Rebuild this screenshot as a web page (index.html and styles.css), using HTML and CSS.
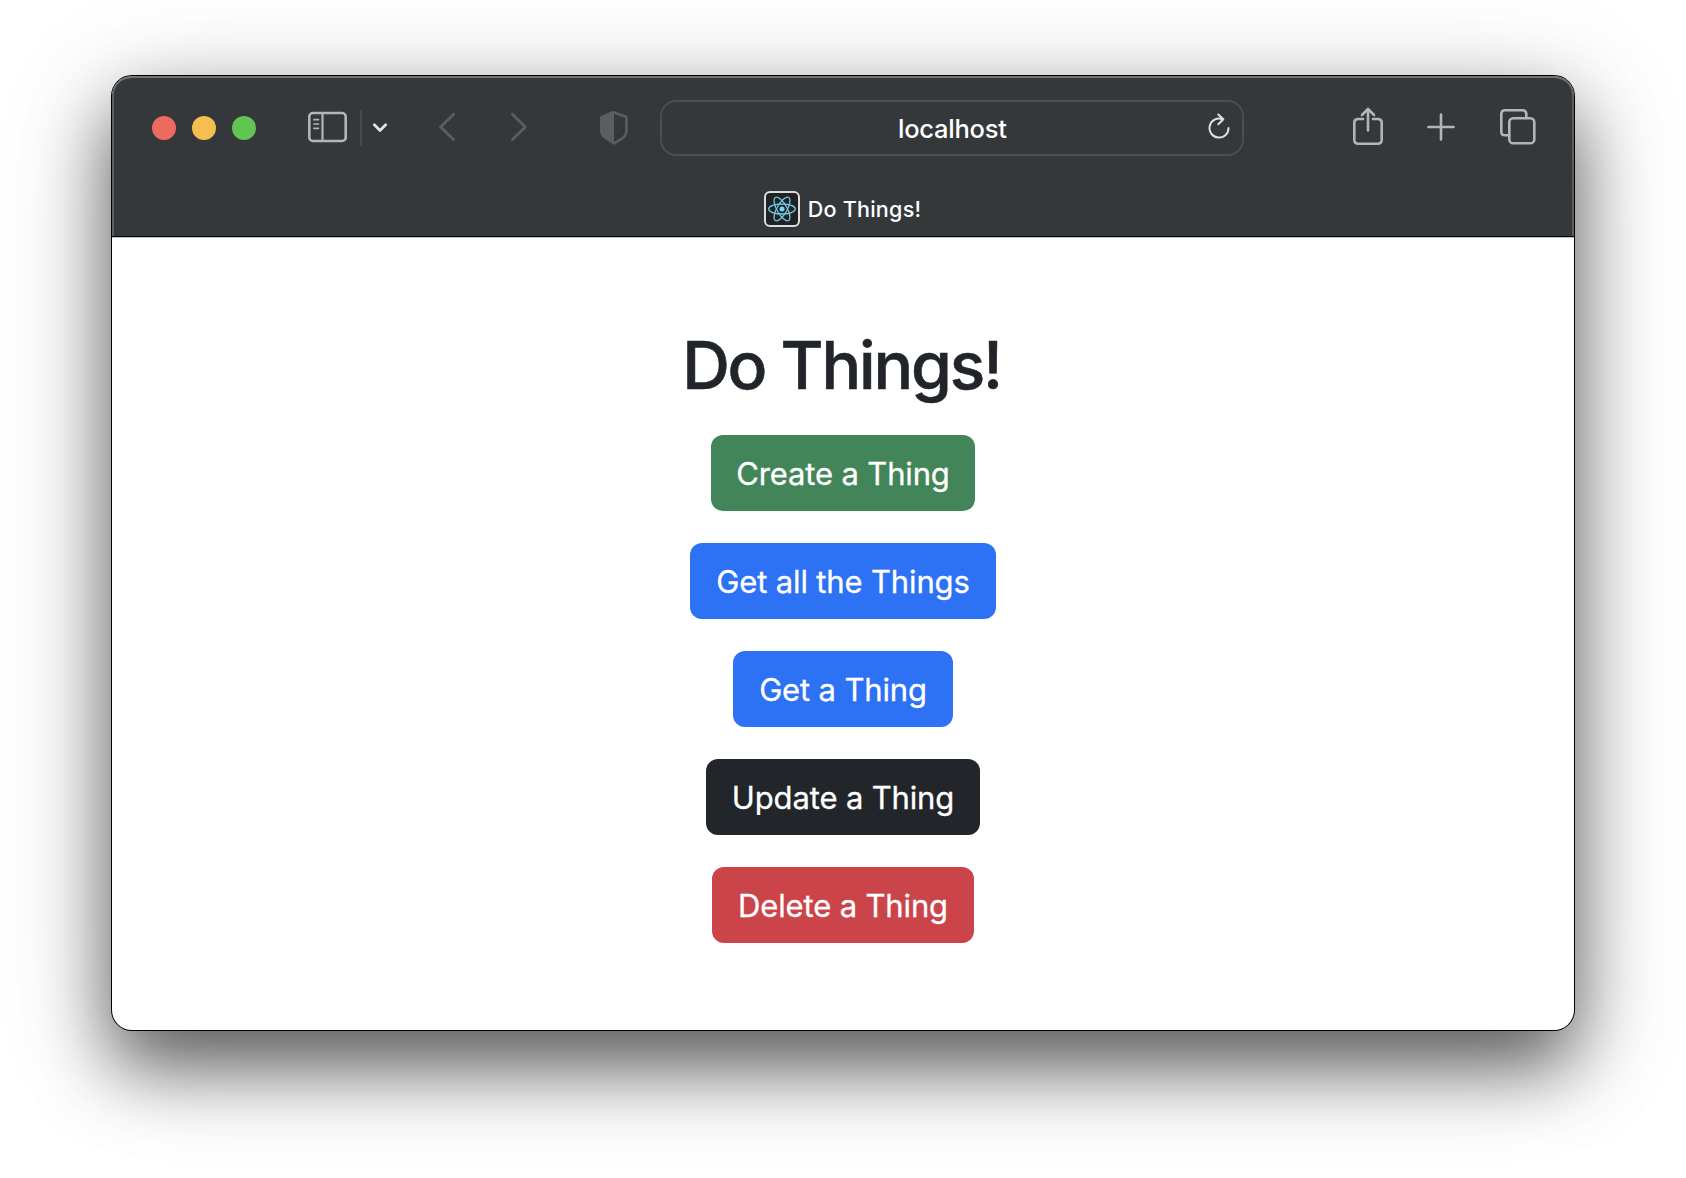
FILE: index.html
```html
<!DOCTYPE html>
<html lang="en">
<head>
<meta charset="utf-8">
<title>Do Things!</title>
<link rel="stylesheet" href="styles.css">
</head>
<body>
<div class="window">
  <header class="chrome">
    <div class="toolbar">
      <div class="lights"><span class="light close"></span><span class="light minimize"></span><span class="light maximize"></span></div>
      <svg class="icon sidebar" width="40" height="32" viewBox="0 0 40 32"><rect x="1.3" y="2" width="36.4" height="28" rx="3.6" stroke-width="2.6"/><path d="M14.5 2v28" stroke-width="2.2"/><path d="M6 8.7h4.5M6 13h4.5M6 17.3h4.5" stroke-width="1.7"/></svg>
      <span class="separator"></span>
      <svg class="icon chevron" width="16" height="12" viewBox="0 0 16 12"><path d="M2.3 2.8 8 8.5l5.7-5.7"/></svg>
      <svg class="icon arrow back" width="18" height="30" viewBox="0 0 18 30"><path d="M15.6 2.2 2.6 15l13 12.6"/></svg>
      <svg class="icon arrow forward" width="18" height="30" viewBox="0 0 18 30"><path d="m2.4 2.2 13 12.8-13 12.6"/></svg>
      <svg class="icon shield" width="28" height="34" viewBox="0 0 28 34"><path class="outline" d="M14 1.5 26.4 6v14c0 3.5-2 6-5.2 8.2L14 32.3"/><path class="half" d="M14 0v33.6L6.2 29C2.2 26.5 0 23.6 0 20V7c0-1.3.6-2 1.9-2.5L11.5.6Z"/></svg>
      <div class="address">
        <span class="host">localhost</span>
        <svg class="icon reload" width="22" height="27" viewBox="0 0 22 27"><path d="M14.3 6.2A9.5 9.5 0 1 0 20.5 15M10.3 1.5l5 4.7-5 5"/></svg>
      </div>
      <svg class="icon share" width="30" height="38" viewBox="0 0 30 38"><path d="M10 12H5.3C2.8 12 1.3 13.3 1.3 15.8v17c0 2.5 1.5 3.9 4 3.9h19.4c2.5 0 4-1.4 4-3.9v-17c0-2.5-1.5-3.8-4-3.8H20M15 23.500V2M9 8l6-6 6 6"/></svg>
      <svg class="icon plus" width="28" height="28" viewBox="0 0 28 28"><path d="M1.500 14h25M14 1.500v25"/></svg>
      <svg class="icon tabs" width="36" height="36" viewBox="0 0 36 36"><path d="M9 26.300H5.200c-2.500 0-3.900-1.400-3.900-3.900V5.200c0-2.500 1.400-3.900 3.900-3.900h17.200c2.500 0 3.900 1.400 3.900 3.900V9"/><rect x="9.300" y="9.300" width="25" height="25" rx="3.900"/></svg>
    </div>
    <div class="tab">
      <svg class="favicon" width="36" height="36" viewBox="0 0 36 36"><rect x="1" y="1" width="34" height="34" rx="5"/><g><ellipse cx="18" cy="18" rx="13.300" ry="5"/><ellipse cx="18" cy="18" rx="13.300" ry="5" transform="rotate(60 18 18)"/><ellipse cx="18" cy="18" rx="13.300" ry="5" transform="rotate(120 18 18)"/></g><circle cx="18" cy="18" r="2.500"/></svg>
      <span class="tab-title">Do Things!</span>
    </div>
  </header>
  <main class="page">
    <h1 class="title">Do Things!</h1>
    <button class="btn create">Create a Thing</button>
    <button class="btn list">Get all the Things</button>
    <button class="btn get">Get a Thing</button>
    <button class="btn update">Update a Thing</button>
    <button class="btn delete">Delete a Thing</button>
  </main>
</div>
</body>
</html>
```
FILE: styles.css
```css
* { box-sizing: border-box; }

body {
  margin: 0;
  height: 1178px;
  padding: 76px 112px;
  overflow: hidden;
  background: #fff;
  font-family: Inter, "Liberation Sans", sans-serif;
}

.window {
  width: 1462px;
  height: 954px;
  border-radius: 20px;
  overflow: hidden;
  background: #fff;
  box-shadow: 0 0 0 1px #000, 0 36px 76px rgba(0, 0, 0, .6), 0 20px 120px rgba(0, 0, 0, .17);
}

.chrome {
  height: 161px;
  border-bottom: 1px solid #000;
  border-radius: 20px 20px 0 0;
  background: #34383b;
  box-shadow: inset 0 2px #717476, inset 2px 0 #5b5f61, inset -2px 0 #5b5f61, 0 1px #c6c6c6;
  color: #fff;
}

.toolbar {
  display: flex;
  align-items: center;
  height: 104px;
  padding: 0 37px 0 40px;
}

.lights { display: flex; gap: 16px; }
.light { width: 24px; height: 24px; border-radius: 50%; }
.close { background: #ed6a5e; }
.minimize { background: #f5bf4f; }
.maximize { background: #61c554; }

.icon {
  flex: none;
  fill: none;
  stroke: #b3b6b9;
  stroke-width: 2.6;
  stroke-linecap: round;
  stroke-linejoin: round;
}
.sidebar { margin: -2px 0 0 52px; }
.separator { width: 2px; height: 36px; margin-left: 12px; background: #484b4e; }
.chevron { margin-left: 10px; stroke: #e3e4e5; stroke-width: 2.8; }
.arrow { stroke: #5b5e61; stroke-width: 2.8; margin-top: -2px; }
.back { margin-left: 50px; }
.forward { margin-left: 54px; }
.shield { margin-left: 72px; stroke: #5b5e61; }
.shield .half { fill: #5b5e61; stroke: none; }

.address {
  display: flex;
  align-items: center;
  justify-content: flex-end;
  flex: none;
  width: 584px;
  height: 56px;
  margin-left: 32px;
  padding-right: 12px;
  border: 2px solid #4c4f52;
  border-radius: 16px;
}
.host {
  flex: 1;
  padding-left: 236px;
  font-size: 25.5px;
  font-weight: 500;
  letter-spacing: -.25px;
}
.reload { margin-top: -3px; stroke: #dedfe0; stroke-width: 2; }
.share { margin: -5px 0 0 109px; }
.plus { margin: -3px 0 0 44px; }
.tabs { margin: -3px 0 0 45px; }

.tab {
  display: flex;
  align-items: center;
  justify-content: center;
  gap: 8px;
  height: 56px;
  padding: 2px 1px 0 0;
}
.favicon { fill: #222; stroke: #ddd; stroke-width: 2; }
.favicon g { fill: none; stroke: #6cc9e8; stroke-width: 1.3; }
.favicon circle { fill: #71d7f7; stroke: none; }
.tab-title { font-size: 21.5px; font-weight: 500; letter-spacing: .25px; }

.page {
  display: flex;
  flex-direction: column;
  align-items: center;
  gap: 32px;
  padding-top: 88px;
}
.title {
  margin: 0 0 -2px;
  height: 80px;
  line-height: 80px;
  color: #212529;
  font-size: 66px;
  font-weight: 500;
  letter-spacing: -2.2px;
  text-indent: -3px;
  -webkit-text-stroke: .6px #212529;
  white-space: nowrap;
}
.btn {
  height: 76px;
  padding: 0;
  border: 0;
  border-radius: 12px;
  color: #fff;
  font: 400 31px Inter, "Liberation Sans", sans-serif;
  letter-spacing: -.15px;
  -webkit-text-stroke: .3px #fff;
  white-space: nowrap;
}
.create { width: 264px; background: #428559; }
.list { width: 306px; background: #2d71f4; }
.get { width: 220px; background: #2d71f4; }
.update { width: 274px; background: #222529; }
.delete { width: 262px; background: #ca444a; }
```
